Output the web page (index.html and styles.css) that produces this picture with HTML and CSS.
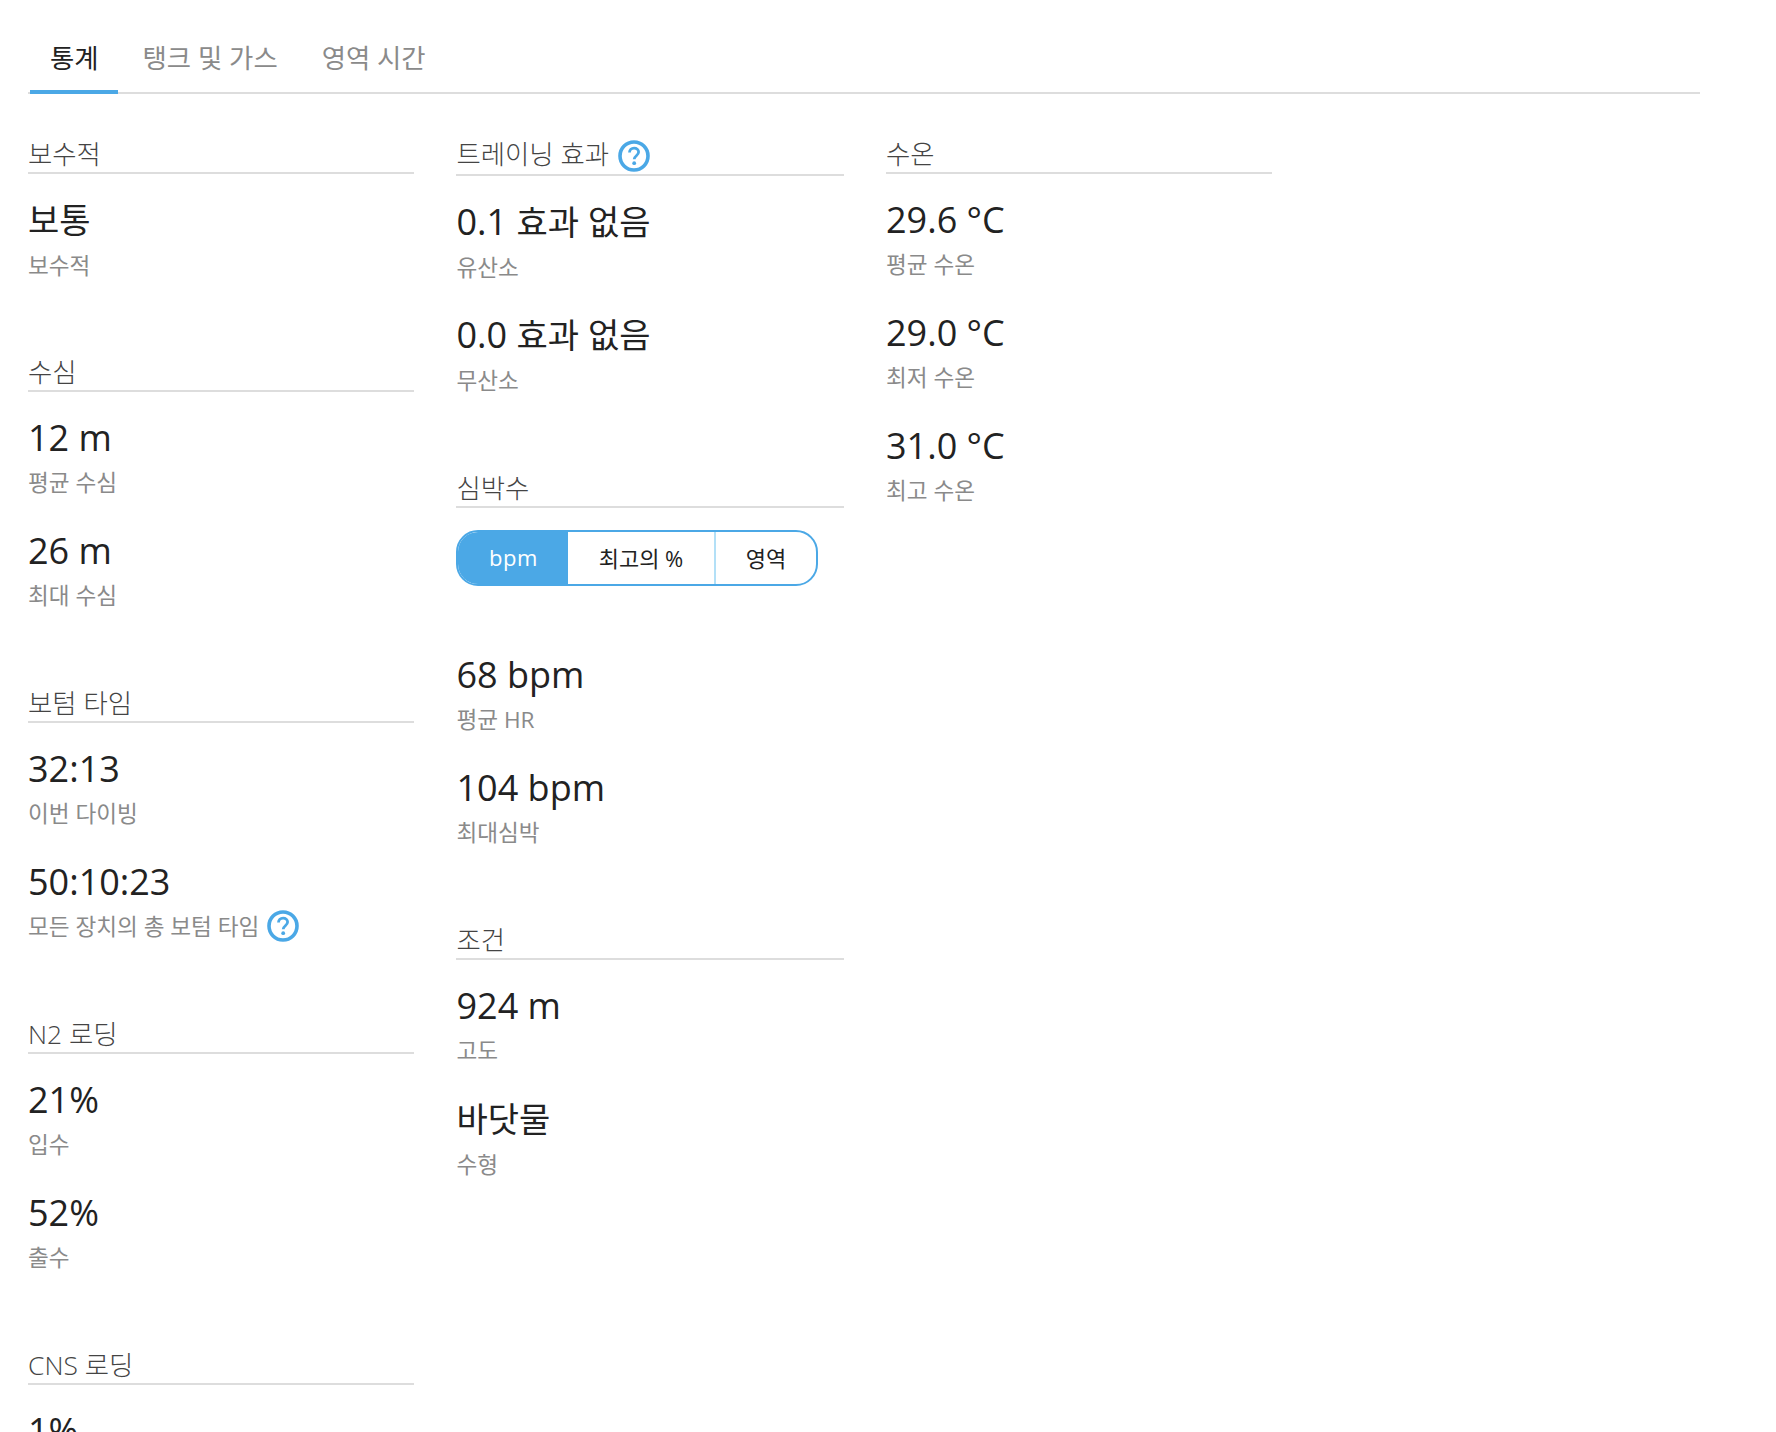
FILE: index.html
```html
<!DOCTYPE html>
<html lang="ko">
<head>
<meta charset="utf-8">
<title>통계</title>
<link rel="stylesheet" href="styles.css">
</head>
<body>
<main class="page">
  <nav class="tabs">
    <a class="tab active">통계</a>
    <a class="tab">탱크 및 가스</a>
    <a class="tab">영역 시간</a>
  </nav>
  <div class="columns">
    <div class="col">
      <section class="section">
        <h3 class="title">보수적</h3>
        <div class="stat"><div class="value"><span class="ko">보통</span></div><div class="label">보수적</div></div>
      </section>
      <section class="section">
        <h3 class="title">수심</h3>
        <div class="stat"><div class="value">12 m</div><div class="label">평균 수심</div></div>
        <div class="stat"><div class="value">26 m</div><div class="label">최대 수심</div></div>
      </section>
      <section class="section">
        <h3 class="title">보텀 타임</h3>
        <div class="stat"><div class="value">32:13</div><div class="label">이번 다이빙</div></div>
        <div class="stat"><div class="value">50:10:23</div><div class="label">모든 장치의 총 보텀 타임 <svg class="help" viewBox="0 0 32 32"><circle cx="16" cy="16" r="14" fill="none" stroke="#4ba8e6" stroke-width="3.6"/><path d="M11.5 12.6c0-2.7 2-4.4 4.6-4.4s4.5 1.6 4.5 3.9c0 3.6-4.4 3.7-4.4 7.2" fill="none" stroke="#4ba8e6" stroke-width="2.8"/><circle cx="16.2" cy="23.2" r="1.9" fill="#4ba8e6"/></svg></div></div>
      </section>
      <section class="section">
        <h3 class="title">N2 로딩</h3>
        <div class="stat"><div class="value">21%</div><div class="label">입수</div></div>
        <div class="stat"><div class="value">52%</div><div class="label">출수</div></div>
      </section>
      <section class="section">
        <h3 class="title">CNS 로딩</h3>
        <div class="stat"><div class="value">1%</div></div>
      </section>
    </div>
    <div class="col col-mid">
      <section class="section section-help">
        <h3 class="title with-help">트레이닝 효과 <svg class="help" viewBox="0 0 32 32"><circle cx="16" cy="16" r="14" fill="none" stroke="#4ba8e6" stroke-width="3.6"/><path d="M11.5 12.6c0-2.7 2-4.4 4.6-4.4s4.5 1.6 4.5 3.9c0 3.6-4.4 3.7-4.4 7.2" fill="none" stroke="#4ba8e6" stroke-width="2.8"/><circle cx="16.2" cy="23.2" r="1.9" fill="#4ba8e6"/></svg></h3>
        <div class="stat"><div class="value">0.1 <span class="ko">효과 없음</span></div><div class="label">유산소</div></div>
        <div class="stat"><div class="value">0.0 <span class="ko">효과 없음</span></div><div class="label">무산소</div></div>
      </section>
      <section class="section">
        <h3 class="title">심박수</h3>
        <div class="toggle">
          <span class="seg seg-on">bpm</span>
          <span class="seg seg-mid">최고의 %</span>
          <span class="seg seg-end">영역</span>
        </div>
        <div class="stat"><div class="value">68 bpm</div><div class="label">평균 HR</div></div>
        <div class="stat"><div class="value">104 bpm</div><div class="label">최대심박</div></div>
      </section>
      <section class="section">
        <h3 class="title">조건</h3>
        <div class="stat"><div class="value">924 m</div><div class="label">고도</div></div>
        <div class="stat"><div class="value"><span class="ko">바닷물</span></div><div class="label">수형</div></div>
      </section>
    </div>
    <div class="col">
      <section class="section">
        <h3 class="title">수온</h3>
        <div class="stat"><div class="value">29.6 °C</div><div class="label">평균 수온</div></div>
        <div class="stat"><div class="value">29.0 °C</div><div class="label">최저 수온</div></div>
        <div class="stat"><div class="value">31.0 °C</div><div class="label">최고 수온</div></div>
      </section>
    </div>
  </div>
</main>
</body>
</html>
```
FILE: styles.css
```css
html, body {
  margin: 0;
  padding: 0;
  background: #fff;
}
body {
  height: 1432px;
  overflow: hidden;
  font-family: "Open Sans", "Noto Sans CJK KR", sans-serif;
  color: #222;
}
.page {
  width: 1672px;
  padding-left: 28px;
}
.tabs {
  display: flex;
  gap: 4.5px;
  height: 94px;
  box-sizing: border-box;
  padding-left: 2px;
  border-bottom: 2px solid #ddd;
}
.tab {
  height: 94px;
  box-sizing: border-box;
  padding: 37px 19.5px 0 20px;
  font-size: 26.4px;
  line-height: 42px;
  color: #8a8a8a;
}
.tab.active {
  color: #222;
  border-bottom: 4px solid #4ba8e6;
}
.columns {
  display: grid;
  grid-template-columns: 386px 388px 386px 386px;
  column-gap: 42px;
  padding-top: 40px;
}
.section {
  margin-bottom: 65px;
}
.section-help {
  margin-bottom: 66px;
}
.title {
  margin: 0;
  height: 40px;
  box-sizing: border-box;
  font-size: 26.4px;
  font-weight: 300;
  line-height: 40px;
  color: #444;
  border-bottom: 2px solid #ddd;
}
.title.with-help {
  height: 42px;
}
.col-mid .title,
.col-mid .stat {
  padding-left: 0.5px;
}
.help {
  width: 32px;
  height: 32px;
  margin-left: 2px;
  vertical-align: -8px;
}
.label .help {
  vertical-align: -7px;
}
.stat {
  height: 113px;
  box-sizing: border-box;
  padding-top: 21px;
}
.value {
  font-size: 36px;
  line-height: 49px;
  color: #222;
}
.ko {
  font-size: 34px;
}
.label {
  font-size: 22.6px;
  line-height: 41px;
  color: #8a8a8a;
}
.toggle {
  display: flex;
  width: 362px;
  height: 56px;
  box-sizing: border-box;
  margin-top: 22px;
  margin-bottom: 43px;
  border: 2px solid #4ba8e6;
  border-radius: 22px;
  overflow: hidden;
  font-size: 22px;
}
.seg {
  display: flex;
  align-items: center;
  justify-content: center;
  box-sizing: border-box;
  padding-bottom: 2px;
  color: #222;
}
.seg-on {
  width: 108px;
  padding-left: 3px;
  background: #4ba8e6;
  color: #fff;
  letter-spacing: 0.6px;
}
.seg-mid {
  width: 150px;
  border-left: 2px solid #4ba8e6;
  border-right: 2px solid #b3e0f7;
}
.seg-end {
  flex: 1;
}
```
